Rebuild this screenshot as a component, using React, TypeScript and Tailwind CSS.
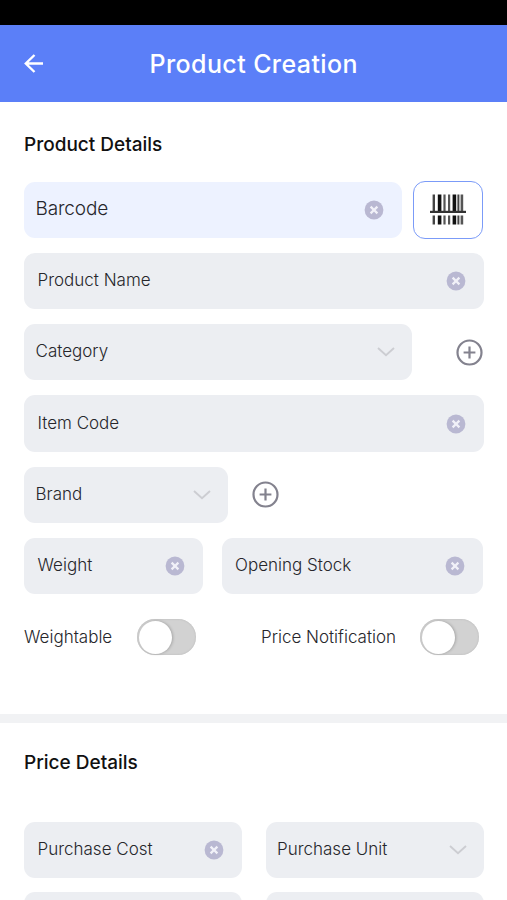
import React from 'react';
import clsx from 'clsx';

const ClearIcon: React.FC = () => (
    <svg width="20" height="20" viewBox="0 0 20 20" className="shrink-0">
        <circle cx="10" cy="10" r="9.4" fill="#b9b8d2" />
        <path d="M6.6 6.6l6.8 6.8M13.4 6.6l-6.8 6.8" stroke="#f1f1f8" strokeWidth="2.2" />
    </svg>
);

const ChevronIcon: React.FC = () => (
    <svg width="18" height="10" viewBox="0 0 18 10" fill="none" className="shrink-0">
        <path d="M1 1l8 7.2L17 1" stroke="#cccdd2" strokeWidth="1.9" />
    </svg>
);

const AddButton: React.FC = () => (
    <button className="shrink-0">
        <svg width="27" height="27" viewBox="0 0 27 27" fill="none" className="block" stroke="#83828e" strokeWidth="2.2">
            <circle cx="13.5" cy="13.5" r="12" />
            <path d="M7.6 13.5h11.8M13.5 7.6v11.8" />
        </svg>
    </button>
);

// [x, width, color] of every bar
const bars: [number, number, string][] = [
    [2.6, 2.4, '#444444'],
    [7.8, 3.6, '#111111'],
    [13.4, 2.2, '#555555'],
    [18, 2.2, '#555555'],
    [22.6, 3.6, '#111111'],
    [27.4, 2, '#444444'],
    [30.6, 2.6, '#555555'],
];

const BarcodeIcon: React.FC = () => (
    <svg width="36" height="32" viewBox="0 0 36 32">
        {bars.map(([x, width, color]) => (
            <React.Fragment key={x}>
                <rect x={x} y="0.5" width={width} height="17" fill={color} />
                <rect x={x} y="21.5" width={width} height="9" fill={color} />
            </React.Fragment>
        ))}
        <rect x="0" y="16.8" width="36" height="2.2" fill="#333333" />
    </svg>
);

interface FieldProps {
    label: string;
    type?: 'input' | 'select';
    className?: string;
    labelClass?: string;
}

const Field: React.FC<FieldProps> = ({ label, type = 'input', className, labelClass = 'text-[17px]' }) => (
    <div
        className={clsx(
            'flex h-[56.3px] items-center justify-between rounded-[11px]',
            type === 'input' ? 'pl-[13.5px] pr-[18px]' : 'pl-[11.5px] pr-[17px]',
            className
        )}
    >
        <span className={clsx('whitespace-nowrap font-light text-[#26262b]', labelClass)}>{label}</span>
        {type === 'input' ? <ClearIcon /> : <ChevronIcon />}
    </div>
);

const Toggle: React.FC = () => (
    <button className="flex h-[36px] w-[59px] items-center rounded-full bg-[#d2d2d2] pl-[1.5px] shadow-[inset_0_0_2px_#b4b4b4]">
        <span className="h-[33.5px] w-[33.5px] rounded-full bg-white shadow-[1px_0_3px_rgba(0,0,0,0.22)]" />
    </button>
);

export default function App() {
    return (
        <div className="flex h-[900px] w-[507px] flex-col overflow-hidden bg-white font-['Inter',sans-serif]">
            <div className="h-[25px] shrink-0 bg-black" />
            <header className="flex h-[76.5px] shrink-0 items-center bg-[#5b7ff8] pl-[24px] text-white">
                <svg width="20" height="20" viewBox="0 0 20 20" fill="none" stroke="currentColor" strokeWidth="2.4">
                    <path d="M19 10.5H1.8M10.5 2L1.8 10.5l8.7 8.5" />
                </svg>
                <h1 className="ml-[105.5px] whitespace-nowrap pt-[2px] text-[25px] font-medium tracking-[0.4px]">Product Creation</h1>
            </header>

            <section className="flex h-[612.5px] shrink-0 flex-col px-[24px] pt-[30px]">
                <h2 className="text-[19px] font-medium leading-[26px] text-[#111111]">Product Details</h2>
                <div className="mt-[24px] flex flex-col gap-[15px]">
                    <div className="flex h-[56.3px] items-center gap-[11px]">
                        <Field
                            label="Barcode"
                            className="w-[379.5px] bg-[#edf2ff] !pl-[11.5px]"
                            labelClass="text-[19px] tracking-[-0.15px]"
                        />
                        <button className="flex h-[58px] w-[70px] shrink-0 items-center justify-center rounded-[12px] border-[1.5px] border-[#7b9bf8] bg-white">
                            <BarcodeIcon />
                        </button>
                    </div>
                    <Field label="Product Name" className="w-[460px] bg-[#eceef2]" />
                    <div className="flex w-[459px] items-center justify-between">
                        <Field label="Category" type="select" className="w-[388px] bg-[#eceef2]" />
                        <AddButton />
                    </div>
                    <Field label="Item Code" className="w-[460px] bg-[#eceef2]" />
                    <div className="flex items-center gap-[24px]">
                        <Field label="Brand" type="select" className="w-[204px] bg-[#eceef2]" />
                        <AddButton />
                    </div>
                    <div className="flex gap-[19px]">
                        <Field label="Weight" className="w-[179px] bg-[#eceef2]" />
                        <Field label="Opening Stock" className="w-[262px] bg-[#eceef2]" />
                    </div>
                </div>
                <div className="mt-[25px] flex w-[455px] items-center text-[17px] font-light text-[#26262b]">
                    <span className="w-[113px]">Weightable</span>
                    <Toggle />
                    <span className="ml-[65px] w-[159px] whitespace-nowrap">Price Notification</span>
                    <Toggle />
                </div>
            </section>

            <div className="h-[8.5px] shrink-0 bg-[#f1f2f4]" />

            <section className="shrink-0 px-[24px] pt-[27px]">
                <h2 className="text-[19px] font-medium leading-[26px] text-[#111111]">Price Details</h2>
                <div className="mt-[46.5px] grid w-[460px] grid-cols-2 gap-x-[24px] gap-y-[14px]">
                    <Field label="Purchase Cost" className="bg-[#eceef2]" />
                    <Field label="Purchase Unit" type="select" className="bg-[#eceef2] !pl-[11px]" />
                    <div className="h-[56.3px] rounded-[11px] bg-[#eceef2]" />
                    <div className="h-[56.3px] rounded-[11px] bg-[#eceef2]" />
                </div>
            </section>
        </div>
    );
}
